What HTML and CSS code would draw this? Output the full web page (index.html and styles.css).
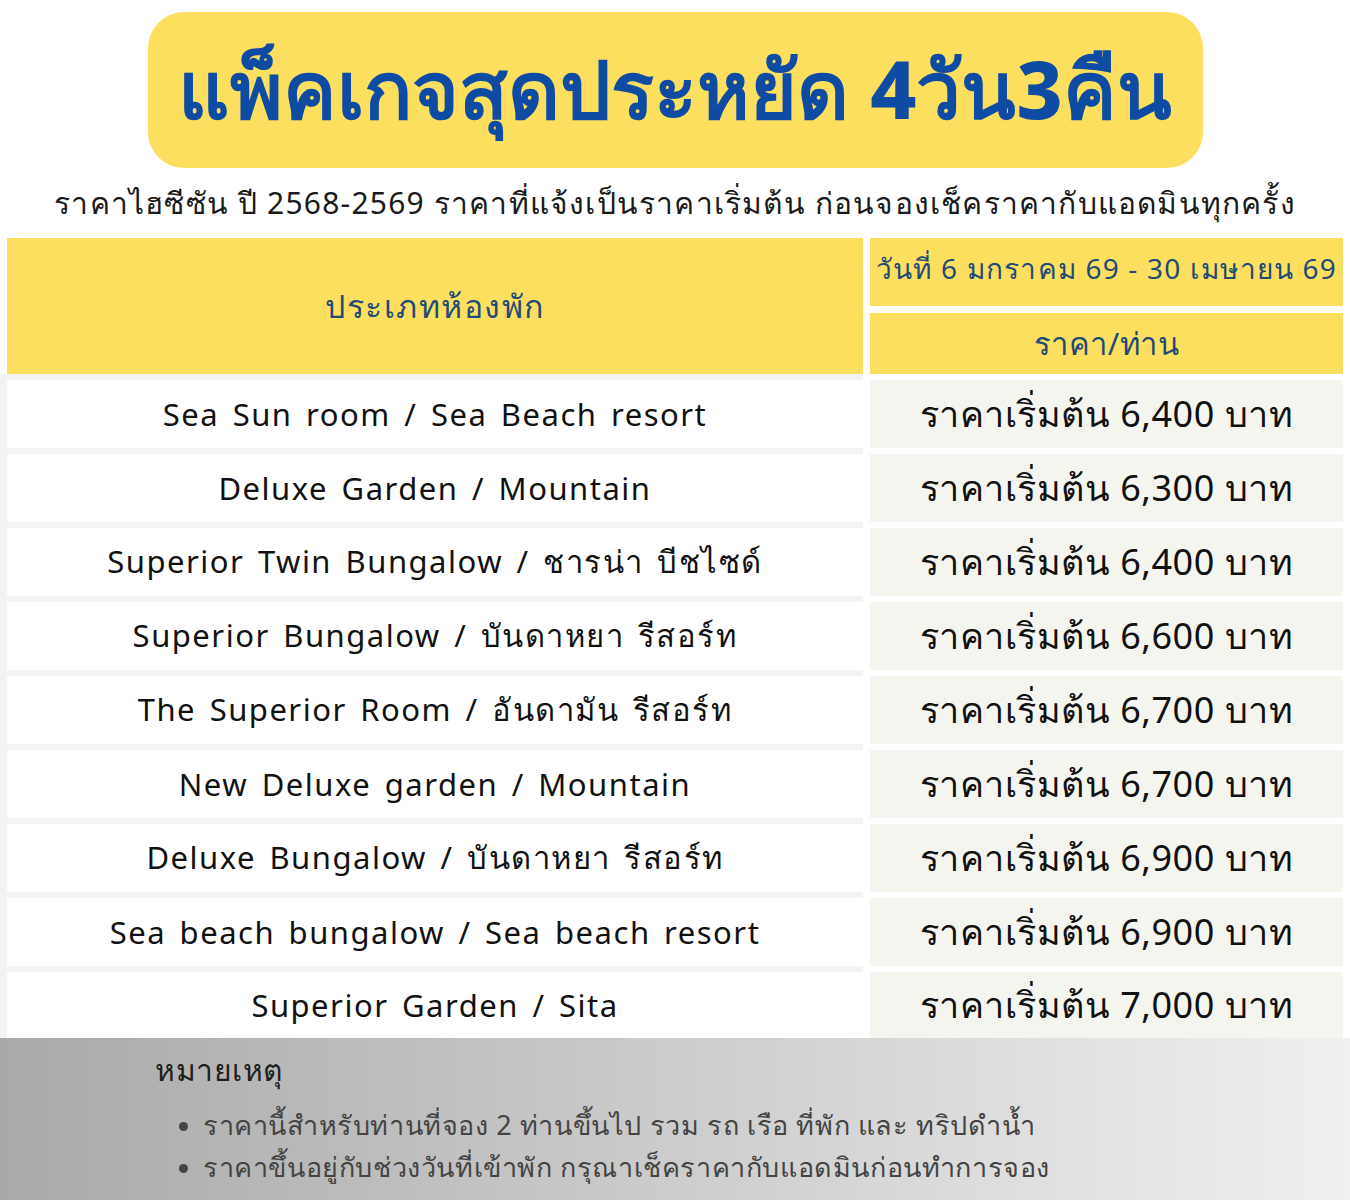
FILE: index.html
```html
<!DOCTYPE html>
<html lang="th">
<head>
<meta charset="utf-8">
<link rel="stylesheet" href="styles.css">
</head>
<body>
<div class="page">
  <div class="title-wrap">
    <div class="title-box"><h1 class="title">แพ็คเกจสุดประหยัด 4วัน3คืน</h1></div>
  </div>
  <p class="subtitle">ราคาไฮซีซัน ปี 2568-2569 ราคาที่แจ้งเป็นราคาเริ่มต้น ก่อนจองเช็คราคากับแอดมินทุกครั้ง</p>
  <div class="head">
    <div class="hcell hleft">ประเภทห้องพัก</div>
    <div class="hcell hdate">วันที่ 6 มกราคม 69 - 30 เมษายน 69</div>
    <div class="hcell hprice">ราคา/ท่าน</div>
  </div>
  <div class="body">
    <div class="row"><div class="room">Sea Sun room / Sea Beach resort</div><div class="price">ราคาเริ่มต้น 6,400 บาท</div></div>
    <div class="row"><div class="room">Deluxe Garden / Mountain</div><div class="price">ราคาเริ่มต้น 6,300 บาท</div></div>
    <div class="row"><div class="room">Superior Twin Bungalow / ชารน่า บีชไซด์</div><div class="price">ราคาเริ่มต้น 6,400 บาท</div></div>
    <div class="row"><div class="room">Superior Bungalow / บันดาหยา รีสอร์ท</div><div class="price">ราคาเริ่มต้น 6,600 บาท</div></div>
    <div class="row"><div class="room">The Superior Room / อันดามัน รีสอร์ท</div><div class="price">ราคาเริ่มต้น 6,700 บาท</div></div>
    <div class="row"><div class="room">New Deluxe garden / Mountain</div><div class="price">ราคาเริ่มต้น 6,700 บาท</div></div>
    <div class="row"><div class="room">Deluxe Bungalow / บันดาหยา รีสอร์ท</div><div class="price">ราคาเริ่มต้น 6,900 บาท</div></div>
    <div class="row"><div class="room">Sea beach bungalow / Sea beach resort</div><div class="price">ราคาเริ่มต้น 6,900 บาท</div></div>
    <div class="row last"><div class="room">Superior Garden / Sita</div><div class="price">ราคาเริ่มต้น 7,000 บาท</div></div>
  </div>
  <div class="note">
    <div class="note-title">หมายเหตุ</div>
    <ul class="note-list">
      <li>ราคานี้สำหรับท่านที่จอง 2 ท่านขึ้นไป รวม รถ เรือ ที่พัก และ ทริปดำน้ำ</li>
      <li>ราคาขึ้นอยู่กับช่วงวันที่เข้าพัก กรุณาเช็คราคากับแอดมินก่อนทำการจอง</li>
    </ul>
  </div>
</div>
</body>
</html>
```
FILE: styles.css
```css
* { box-sizing: border-box; }
html, body { margin: 0; padding: 0; background: #fff; }
body {
  font-family: "Noto Sans", "Open Sans", sans-serif;
  color: #111;
  width: 1350px;
  height: 1200px;
  overflow: hidden;
}
.page { width: 1350px; }
.title-wrap { padding-top: 12px; display: flex; justify-content: center; }
.title-box {
  width: 1055px;
  height: 156px;
  background: #fddf5f;
  border-radius: 36px;
  display: flex;
  align-items: center;
  justify-content: center;
}
.title {
  margin: 0;
  font-size: 80px;
  font-weight: 800;
  color: #0e4ba3;
  letter-spacing: 0;
}
.subtitle {
  margin: 14px 0 0;
  text-align: center;
  font-size: 30px;
  line-height: 42px;
  color: #1a1a1a;
  letter-spacing: 1.2px;
}
.head {
  margin-top: 14px;
  display: grid;
  grid-template-columns: 856px 473px;
  grid-template-rows: 68px 61px;
  gap: 7px;
  padding-left: 7px;
}
.hcell {
  background: #fddf5f;
  color: #1f4b78;
  display: flex;
  align-items: center;
  justify-content: center;
}
.hleft { grid-row: 1 / span 2; font-size: 32px; letter-spacing: 1.5px; }
.hdate { font-size: 28px; letter-spacing: 1.2px; padding-bottom: 6px; }
.hprice { font-size: 31px; letter-spacing: 0.5px; }
.body {
  display: flex;
  flex-direction: column;
  gap: 6px;
  padding-top: 6px;
  background: linear-gradient(to right, #f3f3f3 863px, #fff 863px);
}
.row {
  display: grid;
  grid-template-columns: 856px 473px;
  column-gap: 7px;
  padding-left: 7px;
  height: 68px;
}
.row.last { height: 66px; }
.room, .price {
  display: flex;
  align-items: center;
  justify-content: center;
}
.room { background: #fff; font-size: 31px; color: #111; letter-spacing: 1.5px; word-spacing: 4px; }
.price { background: #f5f5f0; font-size: 36px; color: #111; letter-spacing: 0.5px; }
.note {
  height: 162px;
  background: linear-gradient(to right, #a9a9a9, #f0f0f0);
  padding: 10px 0 0 155px;
}
.note-title { font-size: 30px; line-height: 44px; color: #1e1e1e; letter-spacing: 0.5px; }
.note-list {
  margin: 12px 0 0;
  padding: 0 0 0 48px;
  font-size: 27px;
  line-height: 42px;
  color: #444;
  letter-spacing: 0.6px;
}
.note-list li::marker { font-size: 24px; }
```
